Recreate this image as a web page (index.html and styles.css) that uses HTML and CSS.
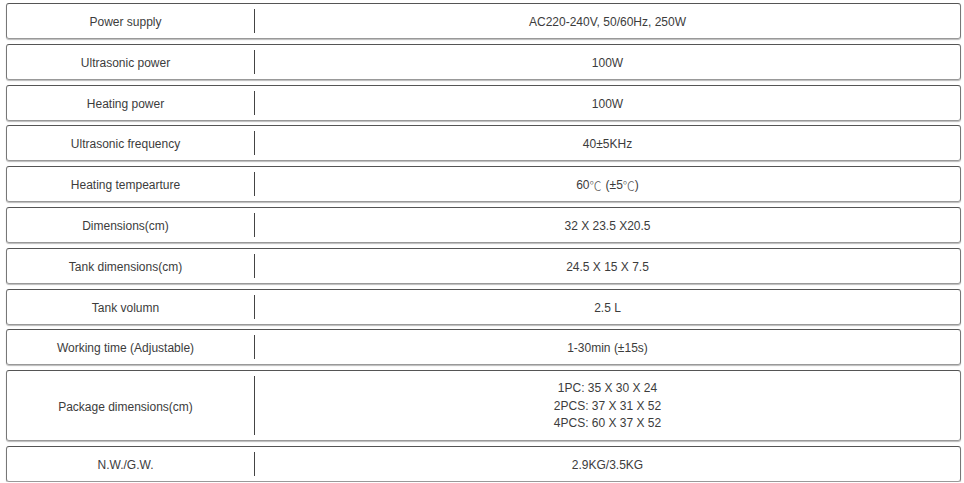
FILE: index.html
```html
<!DOCTYPE html>
<html>
<head>
<meta charset="utf-8">
<link rel="stylesheet" href="styles.css">
</head>
<body>
<div class="spec">
  <div class="row"><div class="key">Power supply</div><div class="val">AC220-240V, 50/60Hz, 250W</div></div>
  <div class="row"><div class="key">Ultrasonic power</div><div class="val">100W</div></div>
  <div class="row"><div class="key">Heating power</div><div class="val">100W</div></div>
  <div class="row"><div class="key">Ultrasonic frequency</div><div class="val">40±5KHz</div></div>
  <div class="row"><div class="key">Heating tempearture</div><div class="val">60<span class="cjk gap">℃</span>(±5<span class="cjk">℃</span>)</div></div>
  <div class="row"><div class="key">Dimensions(cm)</div><div class="val">32 X 23.5 X20.5</div></div>
  <div class="row"><div class="key">Tank dimensions(cm)</div><div class="val">24.5 X 15 X 7.5</div></div>
  <div class="row"><div class="key">Tank volumn</div><div class="val">2.5 L</div></div>
  <div class="row"><div class="key">Working time (Adjustable)</div><div class="val">1-30min (±15s)</div></div>
  <div class="row tall"><div class="key">Package dimensions(cm)</div><div class="val multi"><span>1PC: 35 X 30 X 24</span><span>2PCS: 37 X 31 X 52</span><span>4PCS: 60 X 37 X 52</span></div></div>
  <div class="row"><div class="key">N.W./G.W.</div><div class="val">2.9KG/3.5KG</div></div>
</div>
</body>
</html>
```

FILE: styles.css
```css
html, body {
  margin: 0;
  padding: 0;
  background: #fff;
}
body {
  font-family: "Liberation Sans", Arial, sans-serif;
  font-size: 12px;
  color: #3c3c3c;
}
.spec {
  padding: 3px 3px 0 6px;
  display: flex;
  flex-direction: column;
  gap: 4.8px;
}
.row {
  display: flex;
  align-items: stretch;
  height: 36px;
  box-sizing: border-box;
  border: 1px solid #777;
  border-top-color: #555;
  border-bottom-color: #999;
  border-radius: 3px;
  box-shadow: 0 1px 1px #bbb;
  padding: 5px 0;
}
.row.tall {
  height: 71px;
}
.key {
  width: 247px;
  box-sizing: border-box;
  padding: 2px 10px 0 0;
  display: flex;
  align-items: center;
  justify-content: center;
  text-align: center;
}
.val {
  flex: 1;
  border-left: 1px solid #444;
  display: flex;
  align-items: center;
  justify-content: center;
  text-align: center;
  padding-top: 2px;
}
.cjk {
  font-family: "Noto Sans CJK SC", sans-serif;
  font-weight: 300;
  color: #555;
}
.cjk.gap {
  margin-right: 4px;
}
.val.multi {
  flex-direction: column;
  line-height: 17.5px;
}
.val.multi span {
  display: block;
}
```
